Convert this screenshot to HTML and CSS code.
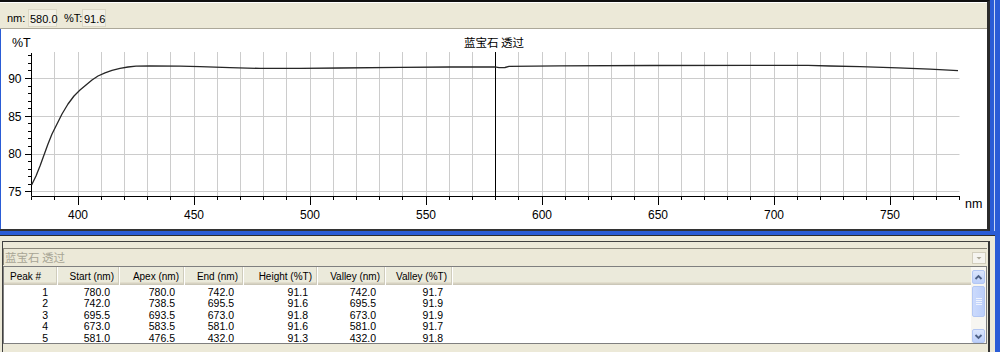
FILE: index.html
```html
<!DOCTYPE html>
<html lang="zh">
<head>
    <meta charset="UTF-8">
    <title>spectrum</title>
    <link rel="stylesheet" href="styles.css">
</head>
<body>
<div class="app">

    <!-- chart window -->
    <div class="plot-win">
        <div class="toolbar">
            <span class="lbl lbl-nm">nm:</span><span class="readout r-nm">580.0</span>
            <span class="lbl lbl-t">%T:</span><span class="readout r-t">91.6</span>
        </div>
        <div class="plot">
            <svg width="986" height="200" viewBox="1 29 986 200" class="chart">
                <!-- grid -->
                <path class="grid" d="M54.5 52V196.5M78.5 52V196.5M101.5 52V196.5M124.5 52V196.5M147.5 52V196.5M170.5 52V196.5M194.5 52V196.5M217.5 52V196.5M240.5 52V196.5M263.5 52V196.5M286.5 52V196.5M310.5 52V196.5M333.5 52V196.5M356.5 52V196.5M379.5 52V196.5M402.5 52V196.5M426.5 52V196.5M449.5 52V196.5M472.5 52V196.5M518.5 52V196.5M542.5 52V196.5M565.5 52V196.5M588.5 52V196.5M611.5 52V196.5M634.5 52V196.5M658.5 52V196.5M681.5 52V196.5M704.5 52V196.5M727.5 52V196.5M750.5 52V196.5M774.5 52V196.5M797.5 52V196.5M820.5 52V196.5M843.5 52V196.5M866.5 52V196.5M890.5 52V196.5M913.5 52V196.5M936.5 52V196.5
                    M31.5 78.5H959.5M31.5 116.5H959.5M31.5 154.5H959.5M31.5 191.5H959.5"/>
                <!-- axes -->
                <path class="axis" d="M31.5 53V196.5H960"/>
                <path class="axis" d="M25 78.5H31.5M25 116.5H31.5M25 154.5H31.5M25 191.5H31.5
                    M28 55.5H31.5M28 63.5H31.5M28 70.5H31.5M28 86.5H31.5M28 93.5H31.5M28 101.5H31.5M28 108.5H31.5M28 123.5H31.5M28 131.5H31.5M28 138.5H31.5M28 146.5H31.5M28 161.5H31.5M28 169.5H31.5M28 176.5H31.5M28 184.5H31.5"/>
                <path class="axis" d="M31.5 197V200M54.5 197V200M78.5 197V205M101.5 197V200M124.5 197V200M147.5 197V200M170.5 197V200M194.5 197V205M217.5 197V200M240.5 197V200M263.5 197V200M286.5 197V200M310.5 197V205M333.5 197V200M356.5 197V200M379.5 197V200M402.5 197V200M426.5 197V205M449.5 197V200M472.5 197V200M495.5 197V200M518.5 197V200M542.5 197V205M565.5 197V200M588.5 197V200M611.5 197V200M634.5 197V200M658.5 197V205M681.5 197V200M704.5 197V200M727.5 197V200M750.5 197V200M774.5 197V205M797.5 197V200M820.5 197V200M843.5 197V200M866.5 197V200M890.5 197V205M913.5 197V200M936.5 197V200M959.5 197V200"/>
                <!-- labels -->
                <text x="12" y="47" class="unit">%T</text>
                <text x="21.5" y="82.5" class="ylbl">90</text>
                <text x="21.5" y="120.5" class="ylbl">85</text>
                <text x="21.5" y="158" class="ylbl">80</text>
                <text x="21.5" y="195.5" class="ylbl">75</text>
                <text x="78" y="219" class="xlbl">400</text>
                <text x="194" y="219" class="xlbl">450</text>
                <text x="310" y="219" class="xlbl">500</text>
                <text x="426" y="219" class="xlbl">550</text>
                <text x="542" y="219" class="xlbl">600</text>
                <text x="658" y="219" class="xlbl">650</text>
                <text x="774" y="219" class="xlbl">700</text>
                <text x="890" y="219" class="xlbl">750</text>
                <text x="965" y="208" class="unit">nm</text>
                <text x="494" y="46.5" class="title">蓝宝石 透过</text>
                <!-- cursor + data -->
                <path class="cursor" d="M495.5 52V196.5"/>
                <path class="curve" d="M31.6 185L36 176L40 166L44 155L48 144L52 134L57 124L62 114L68 104L74 96L80 90L86 85L92 80L98 76L105 72.8L112 70.3L120 68.4L128 67L136 66.2L150 65.9L180 66.1L200 66.7L230 67.6L260 68.4L300 68.4L340 68L400 67.3L450 67L495 66.9L499 67.6L505 67.5L509 66.4L560 65.8L650 65.5L750 65.3L808 65.3L830 66L860 66.7L898 67.8L930 69.2L958 70.6"/>
            </svg>
        </div>
    </div>

    <!-- peak table window -->
    <div class="table-win">
        <div class="inner">
            <div class="combo">
                <span class="combo-text">蓝宝石 透过</span>
                <span class="combo-btn">
                    <svg width="12" height="10" viewBox="0 0 12 10"><path d="M3.5 4H8.5L6 6.5Z" fill="#aca899"/></svg>
                </span>
            </div>
            <div class="list">
                <div class="grid">
                    <div class="row head">
                        <span class="first">Peak #</span><span>Start (nm)</span><span>Apex (nm)</span><span>End (nm)</span><span>Height (%T)</span><span>Valley (nm)</span><span>Valley (%T)</span><span class="fill"></span>
                    </div>
                    <div class="rows">
                        <div class="row"><span>1</span><span>780.0</span><span>780.0</span><span>742.0</span><span>91.1</span><span>742.0</span><span>91.7</span><span></span></div>
                        <div class="row"><span>2</span><span>742.0</span><span>738.5</span><span>695.5</span><span>91.6</span><span>695.5</span><span>91.9</span><span></span></div>
                        <div class="row"><span>3</span><span>695.5</span><span>693.5</span><span>673.0</span><span>91.8</span><span>673.0</span><span>91.9</span><span></span></div>
                        <div class="row"><span>4</span><span>673.0</span><span>583.5</span><span>581.0</span><span>91.6</span><span>581.0</span><span>91.7</span><span></span></div>
                        <div class="row"><span>5</span><span>581.0</span><span>476.5</span><span>432.0</span><span>91.3</span><span>432.0</span><span>91.8</span><span></span></div>
                    </div>
                </div>
                <div class="scrollbar">
                    <div class="sb-btn">
                        <svg width="11" height="11" viewBox="0 0 11 11"><path d="M2.5 7L5.5 4L8.5 7" fill="none" stroke="#4d6185" stroke-width="1.8"/></svg>
                    </div>
                    <div class="sb-thumb"><i></i><i></i><i></i><i></i></div>
                    <div class="sb-track"></div>
                    <div class="sb-btn">
                        <svg width="11" height="11" viewBox="0 0 11 11"><path d="M2.5 4L5.5 7L8.5 4" fill="none" stroke="#4d6185" stroke-width="1.8"/></svg>
                    </div>
                </div>
            </div>
        </div>
    </div>

</div>
</body>
</html>
```

FILE: styles.css
```css
body {
    margin: 0;
    background: #2a5cd6;
    font-family: "Liberation Sans", Arial, sans-serif;
}
.app {
    width: 1000px;
    height: 352px;
    overflow: hidden;
}

/* chart window */
.plot-win {
    width: 990px;
    height: 231px;
    box-sizing: border-box;
    border-top: 2px solid #101010;
    border-right: 3px solid #2b2b2b;
    border-bottom: 2px solid #333;
    background: #ece9d8;
    box-shadow: 4px 0 0 #2a5cd6, 5px 0 0 #c8d6f4;
}
.toolbar {
    height: 27px;
    box-sizing: border-box;
    border-bottom: 1px solid #aca899;
    box-shadow: inset 0 1px #fff;
    display: flex;
    align-items: flex-start;
    padding: 7px 0 0 7px;
    font-size: 11px;
    color: #000;
}
.lbl {
    line-height: 18px;
}
.lbl-nm {
    width: 21px;
}
.lbl-t {
    width: 18px;
    margin-left: 7px;
}
.readout {
    height: 18px;
    line-height: 18px;
    box-sizing: border-box;
    padding-left: 1px;
    background: #f2f0e6;
    border: 1px solid #dcd8c6;
}
.r-nm {
    width: 29px;
}
.r-t {
    width: 24px;
}
.plot {
    height: 200px;
    background: #fff;
    border-left: 1px solid #2a5cd6;
}
.chart {
    display: block;
}
.grid {
    stroke: #cccccc;
    stroke-width: 1;
    fill: none;
}
.axis {
    stroke: #000;
    stroke-width: 1;
    fill: none;
}
.cursor {
    stroke: #000;
    stroke-width: 1;
}
.curve {
    stroke: #262626;
    stroke-width: 1.3;
    fill: none;
    stroke-linejoin: round;
}
.chart text {
    font-family: "Liberation Sans", Arial, sans-serif;
    font-size: 12px;
    fill: #000;
}
.chart .ylbl {
    text-anchor: end;
}
.chart .xlbl {
    text-anchor: middle;
}
.chart .unit {
    font-size: 12.5px;
}
.chart .title {
    text-anchor: middle;
    font-family: "Noto Sans CJK SC", sans-serif;
    font-size: 11.5px;
}

/* peak table window */
.table-win {
    margin-top: 4px;
    width: 995px;
    height: 117px;
    box-sizing: border-box;
    border-top: 1px solid #2b2b2b;
    background: #ece9d8;
    padding: 5px 5px 0 2px;
    overflow: hidden;
}
.inner {
    height: 200px;
    border-top: 1px solid #404040;
    border-left: 1px solid #404040;
    border-right: 2px solid #333;
    padding: 6px 1px 0 0;
}
.combo {
    height: 17px;
    box-sizing: border-box;
    border-top: 1px solid #8a877a;
    border-left: 1px solid #8a877a;
    padding: 0 1px;
    display: flex;
    align-items: center;
    justify-content: space-between;
}
.combo-text {
    color: #a8a595;
    font-family: "Noto Sans CJK SC", sans-serif;
    font-size: 11.5px;
    line-height: 15px;
}
.combo-btn {
    width: 14px;
    height: 12px;
    box-sizing: border-box;
    margin-top: 2px;
    border: 1px solid #d2cebd;
    background: #f5f4ef;
    display: flex;
    align-items: center;
    justify-content: center;
}
.list {
    margin-top: 1px;
    height: 78px;
    box-sizing: border-box;
    border: 1px solid #7f7f7f;
    background: #fff;
    display: flex;
}
.grid {
    flex: 1;
    overflow: hidden;
}
.row {
    display: grid;
    grid-template-columns: 53px 62px 65px 59px 74px 68px 67px 1fr;
    font-size: 10.5px;
    color: #000;
}
.row span {
    text-align: right;
    padding-right: 9px;
    height: 11.6px;
    line-height: 11.6px;
    white-space: nowrap;
}
.head {
    height: 18px;
    font-size: 10px;
    background: #ebeadb;
    box-shadow: inset 0 -1px #cbc7b8, inset 0 -2px #d6d2c2, inset 0 -3px #e2decd;
}
.head span {
    height: 18px;
    line-height: 18px;
    padding-top: 1px;
    padding-right: 4px;
    box-sizing: border-box;
    border-right: 1px solid #cfccbc;
    box-shadow: inset 1px 0 #fff;
}
.head .first {
    text-align: left;
    padding-left: 6px;
    box-shadow: none;
}
.head .fill {
    border-right: none;
}
.rows {
    padding-top: 1.5px;
}

/* scrollbar */
.scrollbar {
    width: 15px;
    box-sizing: border-box;
    padding: 3px 1px 0 1px;
    background: #f7f6f1;
    display: flex;
    flex-direction: column;
}
.sb-btn {
    height: 14px;
    box-sizing: border-box;
    border: 1px solid #b3c7f3;
    border-radius: 2px;
    background: linear-gradient(#dbe6fd, #bccffa);
    display: flex;
    align-items: center;
    justify-content: center;
}
.sb-thumb {
    margin-top: 2px;
    height: 31px;
    box-sizing: border-box;
    border: 1px solid #b3c7f3;
    border-radius: 2px;
    background: linear-gradient(to right, #cbdafc, #bccffa);
    display: flex;
    flex-direction: column;
    align-items: center;
    justify-content: center;
    gap: 1px;
}
.sb-thumb i {
    display: block;
    width: 6px;
    height: 1px;
    background: #eef3fe;
}
.sb-track {
    flex: 1;
}
```
